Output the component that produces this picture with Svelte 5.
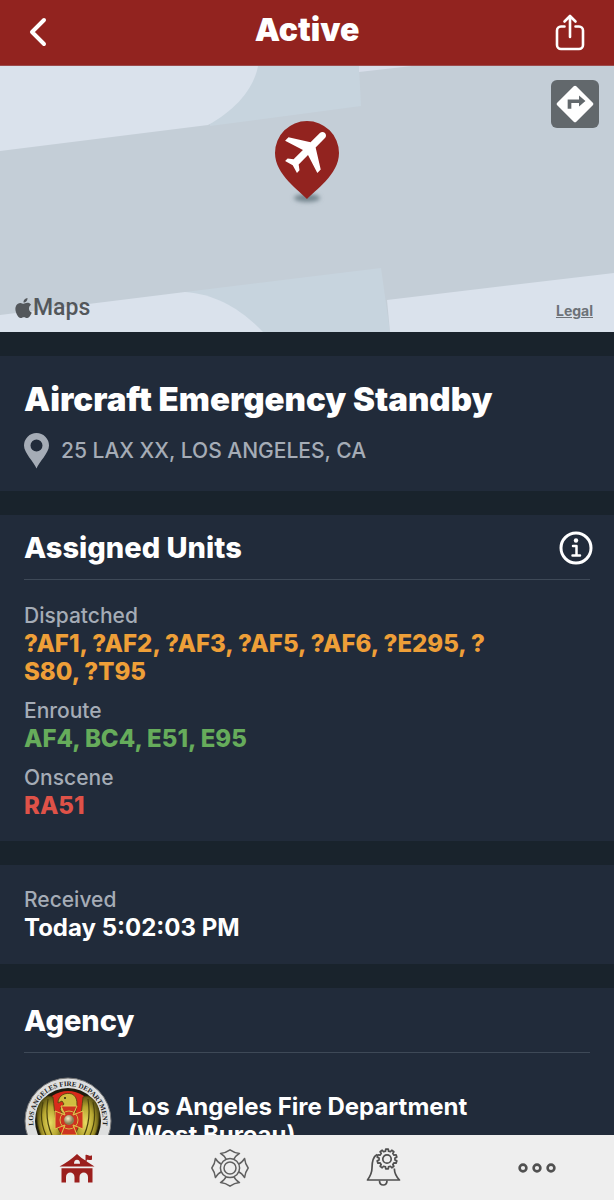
<script>
  const unitGroups = [
    { label: 'Dispatched', tone: 'orange', units: '?AF1, ?AF2, ?AF3, ?AF5, ?AF6, ?E295, ?\u200bS80, ?T95' },
    { label: 'Enroute', tone: 'green', units: 'AF4, BC4, E51, E95' },
    { label: 'Onscene', tone: 'red', units: 'RA51' }
  ];

  // Outline of the small cog on the alerts icon
  function cog(cx, cy, inner, outer, teeth) {
    const points = [];
    const step = (Math.PI * 2) / teeth;
    for (let i = 0; i < teeth; i++) {
      const a = i * step - Math.PI / 2;
      for (const [offset, r] of [[-0.3, inner], [-0.2, outer], [0.2, outer], [0.3, inner]]) {
        const t = a + offset * step;
        points.push(`${(cx + r * Math.cos(t)).toFixed(2)},${(cy + r * Math.sin(t)).toFixed(2)}`);
      }
    }
    return points.join(' ');
  }
  const cogPoints = cog(22, 11, 8, 10, 10);
</script>

<div class="app">
  <header>
    <button class="bar-button" aria-label="Back">
      <svg width="28" height="36" viewBox="0 0 28 36"><path d="M16 6 4 18 16 30" fill="none" stroke="#fff" stroke-width="4" stroke-linecap="round" stroke-linejoin="round" /></svg>
    </button>
    <h1>Active</h1>
    <button class="bar-button" aria-label="Share">
      <svg width="32" height="38" viewBox="0 0 32 38" fill="none" stroke="#fff" stroke-width="2.600" stroke-linecap="round" stroke-linejoin="round">
        <path d="M10.500 13.500H7a4 4 0 0 0-4 4V32a4 4 0 0 0 4 4h18a4 4 0 0 0 4-4V17.500a4 4 0 0 0-4-4h-3.500" />
        <path d="M16 24V4M10.500 8.500 16 3l5.500 5.500" />
      </svg>
    </button>
  </header>

  <main>
    <div class="map">
      <svg class="terrain" viewBox="0 0 614 266" preserveAspectRatio="xMidYMid slice" aria-hidden="true">
        <defs>
          <filter id="soft" x="-50%" y="-100%" width="200%" height="300%"><feGaussianBlur stdDeviation="2" /></filter>
        </defs>
        <rect width="614" height="266" fill="#c4ced7" />
        <path d="M200 0H359L361 40 210 60Z" fill="#c7d4de" />
        <path d="M0 0H258C254 22 236 44 208 59L0 85Z" fill="#dae2ec" />
        <path d="M359 0H412L359 6Z" fill="#d8deea" />
        <path d="M185 226 381 202 390 266H185Z" fill="#c7d4de" />
        <path d="M0 249 185 226C216 228 242 244 263 266H0Z" fill="#dae2ec" />
        <path d="M387 234 614 207V266H390Z" fill="#dae2ec" />
        <ellipse cx="307" cy="132" rx="13" ry="4" fill="#75868f" filter="url(#soft)" />
        <path d="M307 133C300 125 275 109 275 87a32 32 0 0 1 64 0C339 109 314 125 307 133Z" fill="#92231f" />
        <path transform="translate(308 84) rotate(45) scale(2.400) translate(-11.500 -12)" d="M21 16v-2l-8-5V3.500c0-.83-.67-1.500-1.500-1.500S10 2.670 10 3.500V9l-8 5v2l8-2.500V19l-2 1.500V22l3.500-1 3.500 1v-1.500L13 19v-5.500l8 2.500z" fill="#fff" />
      </svg>
      <button class="directions" aria-label="Directions">
        <svg width="44" height="44" viewBox="0 0 24 24"><path fill="#fff" d="M21.710 11.290l-9-9c-.39-.39-1.020-.39-1.410 0l-9 9c-.39.39-.39 1.020 0 1.410l9 9c.39.39 1.020.39 1.410 0l9-9c.39-.38.39-1.010 0-1.410zM14.200 13.400V11.400H10V14.600H8V9.600h6.200V7.400l3.500 3z" /></svg>
      </button>
      <div class="brand">
        <svg width="17" height="20" viewBox="2 0 20 24" fill="#53575b"><path d="M12.152 6.896c-.948 0-2.415-1.078-3.960-1.040-2.040.027-3.910 1.183-4.961 3.014-2.117 3.675-.546 9.103 1.519 12.090 1.013 1.454 2.208 3.090 3.792 3.039 1.520-.065 2.090-.987 3.935-.987 1.831 0 2.350.987 3.960.948 1.637-.026 2.676-1.480 3.676-2.948 1.156-1.688 1.636-3.325 1.662-3.415-.039-.013-3.182-1.221-3.220-4.857-.026-3.040 2.480-4.494 2.597-4.559-1.429-2.090-3.623-2.324-4.390-2.376-2-.156-3.675 1.090-4.610 1.090zM15.530 3.830c.843-1.012 1.400-2.427 1.245-3.830-1.207.052-2.662.805-3.532 1.818-.780.896-1.454 2.338-1.273 3.714 1.338.104 2.715-.688 3.559-1.701z" /></svg>
        <span>Maps</span>
      </div>
      <a class="legal" href="#legal">Legal</a>
    </div>

    <section class="incident">
      <h2 class="title">Aircraft Emergency Standby</h2>
      <p class="address">
        <svg width="25" height="36" viewBox="0 0 25 36"><path fill="#a5acb6" fill-rule="evenodd" d="M12.500 35.500C10 29 0 20 0 12.500a12.500 12.500 0 0 1 25 0C25 20 15 29 12.500 35.500ZM12.500 6.500a6 6 0 1 0 0 12 6 6 0 0 0 0-12Z" /></svg>
        <span>25 LAX XX, LOS ANGELES, CA</span>
      </p>
    </section>

    <section class="units">
      <div class="heading">
        <h2>Assigned Units</h2>
        <button class="info" aria-label="Unit status information">
          <svg width="34" height="34" viewBox="0 0 34 34" fill="none" stroke="#fff">
            <circle cx="17" cy="17" r="15" stroke-width="3" />
            <circle cx="17" cy="9.500" r="2.200" fill="#fff" stroke="none" />
            <path d="M14 15H17.500V24M13.500 24.500H21" stroke-width="2.500" stroke-linecap="round" stroke-linejoin="round" />
          </svg>
        </button>
      </div>
      <dl>
        {#each unitGroups as group}
          <div>
            <dt>{group.label}</dt>
            <dd class={group.tone}>{group.units}</dd>
          </div>
        {/each}
      </dl>
    </section>

    <section class="received">
      <dl>
        <div>
          <dt>Received</dt>
          <dd>Today 5:02:03 PM</dd>
        </div>
      </dl>
    </section>

    <section class="agency">
      <div class="heading"><h2>Agency</h2></div>
      <div class="agency-row">
        <svg class="seal" width="88" height="88" viewBox="0 0 88 88" aria-label="Los Angeles Fire Department seal">
          <defs>
            <path id="rim" d="M12.200 58A34.800 34.800 0 1 1 75.800 58" />
            <radialGradient id="gold"><stop offset="0" stop-color="#e8db62" /><stop offset="0.600" stop-color="#b5a52f" /><stop offset="1" stop-color="#5d5414" /></radialGradient>
            <radialGradient id="pearl" cx="40%" cy="35%"><stop offset="0" stop-color="#f5eecb" /><stop offset="1" stop-color="#8a8154" /></radialGradient>
          </defs>
          <circle cx="44" cy="44" r="43" fill="#dedfdf" stroke="#777" stroke-width="1" />
          <circle cx="44" cy="44" r="33" fill="#1d1b0d" />
          <path d="M28 19Q44 9 60 19L66 68H22Z" fill="#d92a1b" />
          <g fill="url(#gold)" stroke="#4b430d" stroke-width="0.800">
            <path d="M29 20C22 17 15 24 13 34C12 50 17 64 28 72L40 60C31 52 31 38 29 20Z" />
            <path d="M59 20C66 17 73 24 75 34C76 50 71 64 60 72L48 60C57 52 57 38 59 20Z" />
          </g>
          <path d="M24 22Q20 46 31 64M19 25Q14 46 25 64M64 22Q68 46 57 64M69 25Q74 46 63 64" fill="none" stroke="#4b430d" stroke-width="1.200" />
          <path d="M36 32 40 27 38 24 34 26C34 18 42 15 48 17 54 20 54 28 51 36H38Z" fill="#d0bd40" stroke="#4b430d" stroke-width="0.800" />
          <circle cx="41" cy="21" r="1" fill="#292209" />
          <path d="M37 29H53L49 38 59 34V52L49 48 53 58H37L41 48 31 52V34L41 38Z" fill="#ce3420" stroke="#e0c850" stroke-width="1" />
          <circle cx="45" cy="43" r="9" fill="none" stroke="#d7bc47" stroke-width="1" />
          <circle cx="45" cy="43" r="5" fill="url(#pearl)" />
          <text><textPath href="#rim" startOffset="50%" text-anchor="middle">LOS ANGELES FIRE DEPARTMENT</textPath></text>
        </svg>
        <p>Los Angeles Fire Department<br />(West Bureau)</p>
      </div>
    </section>
  </main>

  <nav aria-label="Main">
    <a href="#home" aria-label="Home">
      <svg width="40" height="40" viewBox="0 0 40 40" fill="#9b1f1d">
        <path fill-rule="evenodd" d="M2.500 18.600C9 15 15 11 20 6Q24 10 28.500 12.500V7C31 6 32 9 35 7.300V11.500C33 13 31.500 11 29.700 12V13.500L37.500 18.600ZM20 11.800Q17 12 17 15.700H23Q23 12 20 11.800Z" />
        <path d="M4.500 20.200H35.500V34.500H31V29C31 23 22.500 23 22.500 29V34.500H17.500V29C17.500 23 9 23 9 29V34.500H4.500Z" />
      </svg>
    </a>
    <a href="#stations" aria-label="Stations">
      <svg width="40" height="40" viewBox="0 0 40 40" fill="none" stroke="#606060" stroke-width="1.500" stroke-linejoin="round">
        <circle cx="20" cy="20" r="9.600" /><circle cx="20" cy="20" r="6" />
        {#each [0, 90, 180, 270] as angle}
          <path transform="rotate({angle} 20 20)" d="M16 11.200C15.300 9 13 7 10.500 5.400Q15.500 5 20 1.800Q24.500 5 29.500 5.400C27 7 24.700 9 24 11.200" />
        {/each}
      </svg>
    </a>
    <a href="#alerts" aria-label="Alert settings">
      <svg width="38" height="40" viewBox="0 0 38 40" fill="none" stroke="#505050" stroke-width="1.700" stroke-linejoin="round">
        <path d="M12 6.500C7.500 9 7 15 7 20C7 25 5 28.500 2.500 32H34.500C31.500 29 29.500 25 29.300 20.500" />
        <path d="M14.500 32.500C14.500 38.500 22 38.500 22 32.500" />
        <polygon points={cogPoints} />
        <circle cx="22" cy="11" r="4.200" />
      </svg>
    </a>
    <a href="#more" aria-label="More">
      <svg width="40" height="12" viewBox="0 0 40 12" fill="none" stroke="#505050" stroke-width="2.600"><circle cx="6" cy="6" r="3.400" /><circle cx="20" cy="6" r="3.400" /><circle cx="34" cy="6" r="3.400" /></svg>
    </a>
  </nav>
</div>

<style>
  :global(body) { margin: 0; background: #19232c; }
  .app {
    display: flex;
    flex-direction: column;
    height: 100vh;
    font-family: Inter, "Liberation Sans", sans-serif;
    color: #fff;
    background: #19232c;
  }
  h1, h2, p, dl, dd { margin: 0; }
  button { padding: 0; border: 0; background: none; cursor: pointer; }
  svg { display: block; flex: none; }

  header {
    display: flex;
    flex: none;
    align-items: center;
    justify-content: space-between;
    box-sizing: border-box;
    height: 66px;
    padding: 0 28px 2px;
    background: #92231f;
    border-bottom: 1px solid #9c4a4b;
  }
  h1 { padding-bottom: 3px; font-size: 32px; line-height: 36px; font-weight: 900; }
  .bar-button { display: grid; width: 40px; height: 40px; align-items: center; justify-items: start; }
  .bar-button:last-child { justify-items: end; }

  main {
    display: flex;
    flex: 1;
    flex-direction: column;
    gap: 24px;
    min-height: 0;
    overflow: auto;
    scrollbar-width: none;
  }
  .map { position: relative; flex: none; height: 266px; }
  .terrain { width: 100%; height: 100%; }
  .directions {
    position: absolute;
    top: 14px;
    right: 15px;
    display: grid;
    place-items: center;
    width: 48px;
    height: 48px;
    border-radius: 6px;
    background: #62686c;
  }
  .brand {
    position: absolute;
    left: 15px;
    bottom: 10px;
    display: flex;
    align-items: center;
    gap: 1px;
    color: #53575b;
    font: 500 23px/28px Roboto, sans-serif;
  }
  .legal {
    position: absolute;
    right: 21px;
    bottom: 13px;
    color: #6d7278;
    font-size: 14px;
    line-height: 16px;
    font-weight: 700;
  }

  section { flex: none; padding: 24px; background: #212b3a; }
  h2 { font-size: 29px; line-height: 36px; font-weight: 800; }
  .incident { padding-top: 25px; padding-bottom: 20px; }
  .title { font-size: 33px; font-weight: 900; }
  .address {
    display: flex;
    align-items: center;
    gap: 12px;
    margin-top: 14px;
    min-height: 40px;
    color: #a5acb6;
    font-size: 21px;
    line-height: 28px;
    font-weight: 500;
  }
  .heading {
    display: flex;
    align-items: center;
    justify-content: space-between;
    padding-bottom: 13px;
    border-bottom: 1px solid #3e4957;
  }
  .units, .agency { padding-top: 15px; }
  .units { padding-bottom: 21px; }
  .info { margin-right: -3px; }
  dl { display: grid; gap: 11px; }
  .units dl { padding-top: 22px; max-width: 480px; }
  dt { color: #a5acb6; font-size: 21px; line-height: 28px; font-weight: 500; }
  dd { font-size: 24px; line-height: 28px; font-weight: 700; }
  .received { padding: 21px 24px 22px; }
  .orange { color: #ee9f38; }
  .green { color: #66ac5b; }
  .red { color: #df5248; }
  .units dd { font-weight: 800; }
  .agency-row {
    display: flex;
    align-items: center;
    gap: 16px;
    padding-top: 24px;
    font-size: 24px;
    line-height: 28px;
    font-weight: 700;
  }
  .seal text { font: 700 7px "Liberation Serif", serif; fill: #222; }

  nav {
    display: grid;
    flex: none;
    grid-template-columns: repeat(4, 1fr);
    height: 65px;
    background: #eee;
  }
  nav a { display: grid; place-items: center; }
</style>
